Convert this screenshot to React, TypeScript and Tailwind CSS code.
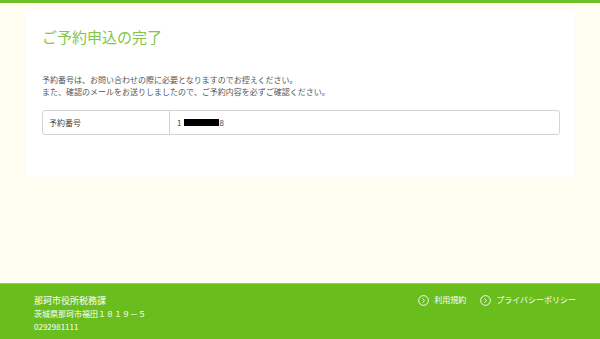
import React from "react"

function CircleArrow() {
  return (
    <svg width="11" height="11" viewBox="0 0 12 12" fill="none" stroke="currentColor" strokeWidth="1">
      <circle cx="6" cy="6" r="5.3" />
      <path d="M5 3.8 L7 6 L5 8.2" />
    </svg>
  )
}

export default function App() {
  const font = { fontFamily: '"Noto Sans CJK JP", "Noto Sans", sans-serif' }
  return (
    <div className="w-[600px] h-[339px] flex flex-col bg-[#fffdf2] overflow-hidden" style={font}>
      <div className="h-[3px] bg-[#6dbf27]" />
      <main className="flex-1 px-[25px] pt-[7px]">
        <div className="bg-white h-[167px] pl-[17px] pr-[15px] pt-[17px]">
          <h1 className="text-[15px] leading-[20px] text-[#82c648]">ご予約申込の完了</h1>
          <div className="mt-[27px] text-[8px] leading-[12px] text-[#555]">
            <p>予約番号は、お問い合わせの際に必要となりますのでお控えください。</p>
            <p>また、確認のメールをお送りしましたので、ご予約内容を必ずご確認ください。</p>
          </div>
          <div className="mt-[12px] flex h-[25px] border border-[#d4d4d4] rounded-[3px] text-[8px] text-[#444]">
            <div className="w-[127px] border-r border-[#d4d4d4] flex items-center pl-[6px]">予約番号</div>
            <div className="flex items-center pl-[7px]">
              <span>1</span>
              <span className="inline-block w-[35px] h-[7px] bg-black ml-[3px]" />
              <span>8</span>
            </div>
          </div>
        </div>
      </main>
      <footer className="h-[56px] bg-[#69bd1d] border-t border-[#8fcf55] flex justify-between pl-[34px] pr-[24px] pt-[10px] text-white">
        <div className="text-[8px] leading-[13px]">
          <p className="text-[9px]">那珂市役所税務課</p>
          <p>茨城県那珂市福田１８１９－５</p>
          <p>0292981111</p>
        </div>
        <div className="flex items-start gap-[14px] text-[8px]">
          <a className="flex items-center gap-[5px]"><CircleArrow />利用規約</a>
          <a className="flex items-center gap-[5px]"><CircleArrow />プライバシーポリシー</a>
        </div>
      </footer>
    </div>
  )
}
